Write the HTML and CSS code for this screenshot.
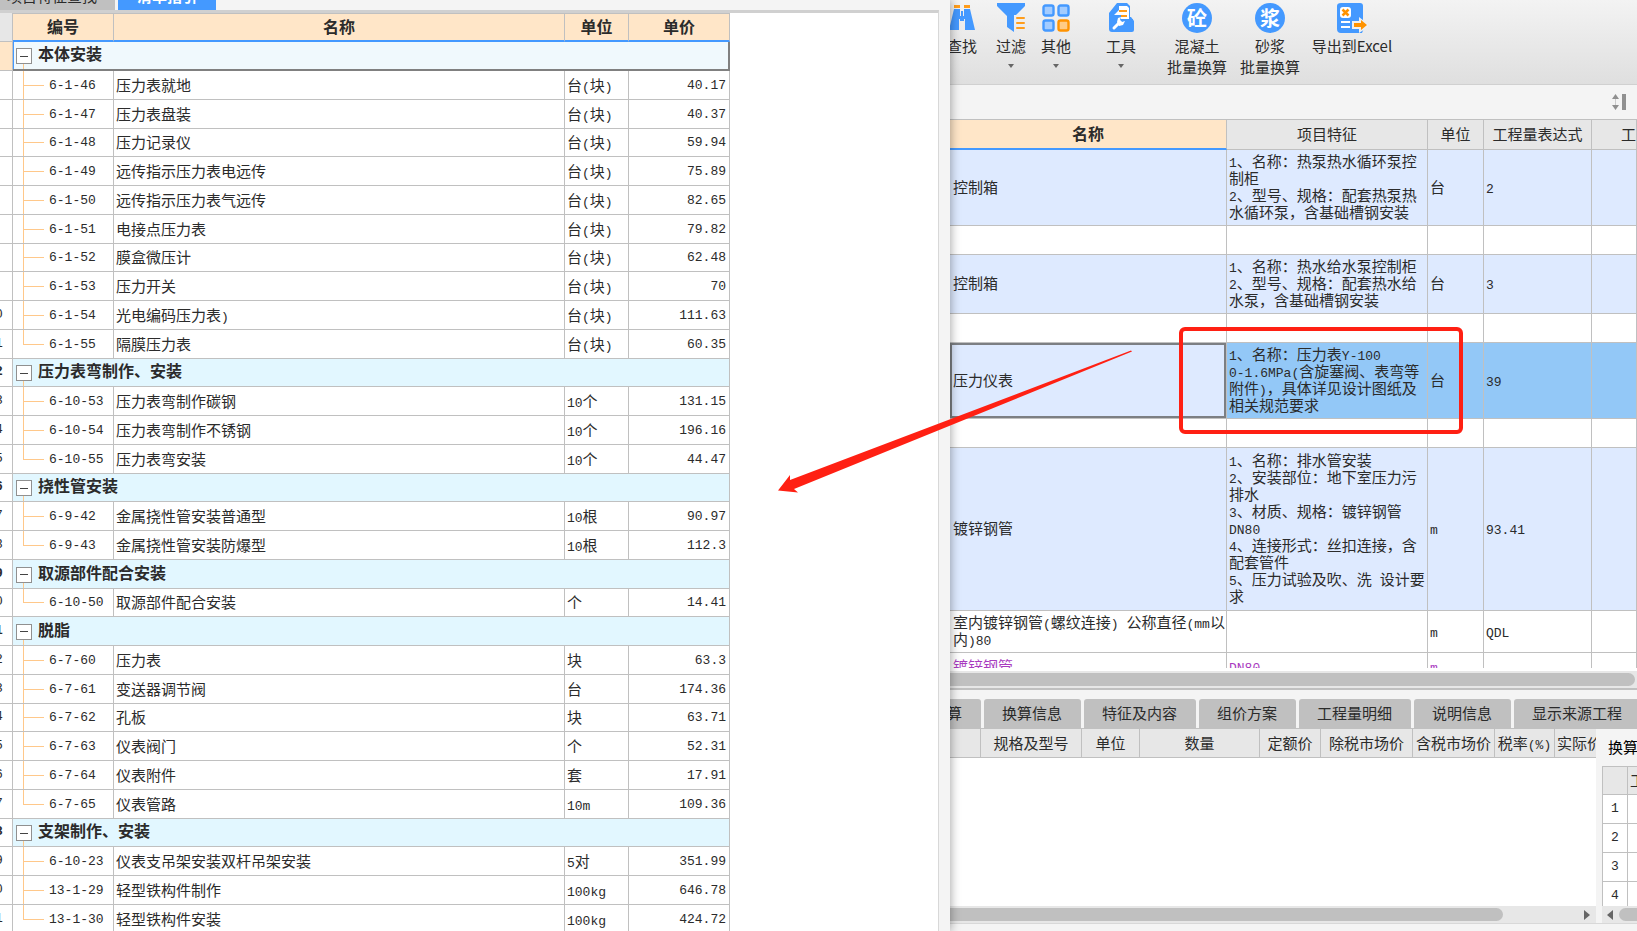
FILE: index.html
```html
<!DOCTYPE html>
<html lang="zh-CN">
<head>
<meta charset="utf-8">
<title>清单指引</title>
<link rel="stylesheet" href="styles.css">
</head>
<body>
<div class="app">
  <section class="guide">
    <nav class="guide-tabs">
      <button class="guide-tab">项目特征查找</button>
      <button class="guide-tab active">清单指引</button>
    </nav>
    <div class="guide-body">
      <table class="grid guide-table">
        <colgroup><col class="c-no"><col class="c-code"><col class="c-name"><col class="c-unit"><col class="c-price"></colgroup>
        <thead>
          <tr><th class="no"></th><th>编号</th><th>名称</th><th>单位</th><th>单价</th></tr>
        </thead>
        <tbody>
          <tr class="group current"><td class="no"></td><td colspan="4"><button class="fold" aria-label="折叠"></button>本体安装</td></tr>
          <tr><td class="no"></td><td class="code">6-1-46</td><td>压力表就地</td><td>台<span class="lat">(</span>块<span class="lat">)</span></td><td class="price">40.17</td></tr>
          <tr><td class="no"></td><td class="code">6-1-47</td><td>压力表盘装</td><td>台<span class="lat">(</span>块<span class="lat">)</span></td><td class="price">40.37</td></tr>
          <tr><td class="no"></td><td class="code">6-1-48</td><td>压力记录仪</td><td>台<span class="lat">(</span>块<span class="lat">)</span></td><td class="price">59.94</td></tr>
          <tr><td class="no"></td><td class="code">6-1-49</td><td>远传指示压力表电远传</td><td>台<span class="lat">(</span>块<span class="lat">)</span></td><td class="price">75.89</td></tr>
          <tr><td class="no"></td><td class="code">6-1-50</td><td>远传指示压力表气远传</td><td>台<span class="lat">(</span>块<span class="lat">)</span></td><td class="price">82.65</td></tr>
          <tr><td class="no"></td><td class="code">6-1-51</td><td>电接点压力表</td><td>台<span class="lat">(</span>块<span class="lat">)</span></td><td class="price">79.82</td></tr>
          <tr><td class="no"></td><td class="code">6-1-52</td><td>膜盒微压计</td><td>台<span class="lat">(</span>块<span class="lat">)</span></td><td class="price">62.48</td></tr>
          <tr><td class="no"></td><td class="code">6-1-53</td><td>压力开关</td><td>台<span class="lat">(</span>块<span class="lat">)</span></td><td class="price">70</td></tr>
          <tr><td class="no">10</td><td class="code">6-1-54</td><td>光电编码压力表<span class="lat">)</span></td><td>台<span class="lat">(</span>块<span class="lat">)</span></td><td class="price">111.63</td></tr>
          <tr><td class="no">11</td><td class="code last">6-1-55</td><td>隔膜压力表</td><td>台<span class="lat">(</span>块<span class="lat">)</span></td><td class="price">60.35</td></tr>
          <tr class="group"><td class="no">12</td><td colspan="4"><button class="fold" aria-label="折叠"></button>压力表弯制作、安装</td></tr>
          <tr><td class="no">13</td><td class="code">6-10-53</td><td>压力表弯制作碳钢</td><td><span class="lat">10</span>个</td><td class="price">131.15</td></tr>
          <tr><td class="no">14</td><td class="code">6-10-54</td><td>压力表弯制作不锈钢</td><td><span class="lat">10</span>个</td><td class="price">196.16</td></tr>
          <tr><td class="no">15</td><td class="code last">6-10-55</td><td>压力表弯安装</td><td><span class="lat">10</span>个</td><td class="price">44.47</td></tr>
          <tr class="group"><td class="no">16</td><td colspan="4"><button class="fold" aria-label="折叠"></button>挠性管安装</td></tr>
          <tr><td class="no">17</td><td class="code">6-9-42</td><td>金属挠性管安装普通型</td><td><span class="lat">10</span>根</td><td class="price">90.97</td></tr>
          <tr><td class="no">18</td><td class="code last">6-9-43</td><td>金属挠性管安装防爆型</td><td><span class="lat">10</span>根</td><td class="price">112.3</td></tr>
          <tr class="group"><td class="no">19</td><td colspan="4"><button class="fold" aria-label="折叠"></button>取源部件配合安装</td></tr>
          <tr><td class="no">20</td><td class="code last">6-10-50</td><td>取源部件配合安装</td><td>个</td><td class="price">14.41</td></tr>
          <tr class="group"><td class="no">21</td><td colspan="4"><button class="fold" aria-label="折叠"></button>脱脂</td></tr>
          <tr><td class="no">22</td><td class="code">6-7-60</td><td>压力表</td><td>块</td><td class="price">63.3</td></tr>
          <tr><td class="no">23</td><td class="code">6-7-61</td><td>变送器调节阀</td><td>台</td><td class="price">174.36</td></tr>
          <tr><td class="no">24</td><td class="code">6-7-62</td><td>孔板</td><td>块</td><td class="price">63.71</td></tr>
          <tr><td class="no">25</td><td class="code">6-7-63</td><td>仪表阀门</td><td>个</td><td class="price">52.31</td></tr>
          <tr><td class="no">26</td><td class="code">6-7-64</td><td>仪表附件</td><td>套</td><td class="price">17.91</td></tr>
          <tr><td class="no">27</td><td class="code last">6-7-65</td><td>仪表管路</td><td><span class="lat">10m</span></td><td class="price">109.36</td></tr>
          <tr class="group"><td class="no">28</td><td colspan="4"><button class="fold" aria-label="折叠"></button>支架制作、安装</td></tr>
          <tr><td class="no">29</td><td class="code">6-10-23</td><td>仪表支吊架安装双杆吊架安装</td><td><span class="lat">5</span>对</td><td class="price">351.99</td></tr>
          <tr><td class="no">30</td><td class="code">13-1-29</td><td>轻型铁构件制作</td><td><span class="lat">100kg</span></td><td class="price">646.78</td></tr>
          <tr><td class="no">31</td><td class="code last">13-1-30</td><td>轻型铁构件安装</td><td><span class="lat">100kg</span></td><td class="price">424.72</td></tr>
        </tbody>
      </table>
    </div>
  </section>

  <main class="work">
    <div class="toolbar">
      <button class="tool find">
        <svg width="30" height="32" viewBox="0 0 30 32"><g fill="#ff9d1c"><rect x="7" y="3" width="6" height="3"/><rect x="17" y="3" width="6" height="3"/></g><path fill="#4499ff" d="M7 7h6v7h1V9h2v5h1V7h6l5 21H18V17h-1v2h-4v-2h-1v11H2z"/></svg>
        <span>查找</span>
      </button>
      <button class="tool filter">
        <svg width="30" height="32" viewBox="0 0 30 32"><path fill="#4499ff" d="M1 1h28v3l-9 9h-2v17l-7-5V14L1 4z"/><path stroke="#ff9d1c" stroke-width="2" stroke-linecap="round" d="M21 16h7M21 21h7M21 26h7"/></svg>
        <span>过滤</span><i class="caret"></i>
      </button>
      <button class="tool other">
        <svg width="30" height="32" viewBox="0 0 30 32" stroke-width="2.400"><g fill="#a3ccff" stroke="#4499ff"><rect x="2.500" y="3.500" width="10" height="10" rx="2"/><rect x="17.500" y="3.500" width="10" height="10" rx="2"/><rect x="2.500" y="18.500" width="10" height="10" rx="2"/></g><rect x="17.500" y="18.500" width="10" height="10" rx="2" fill="#ffcb85" stroke="#ff9300"/></svg>
        <span>其他</span><i class="caret"></i>
      </button>
      <button class="tool kit">
        <svg width="30" height="32" viewBox="0 0 30 32"><path fill="#4499ff" d="M11 1h10l3 3v11h1l3 4v9q0 2-2 2H6q-3 0-3-3V11z"/><path fill="#fff" d="M13 4h8l2 2v11h-8v-4H8l5-5z"/><path stroke="#ff9d1c" stroke-width="2" d="M13 9h8M15 14h6"/><path fill="#4499ff" d="M6 14h8v3h13v10H6z"/><path fill="none" stroke="#fff" stroke-width="3" stroke-linecap="round" d="M8 26l6-6"/><path fill="#fff" d="M11 20l1-4 3-1-1 3 2 2 3-1-2 4-4 1z"/></svg>
        <span>工具</span><i class="caret"></i>
      </button>
      <button class="tool concrete">
        <span class="badge">砼</span>
        <span>混凝土<br>批量换算</span>
      </button>
      <button class="tool mortar">
        <span class="badge">浆</span>
        <span>砂浆<br>批量换算</span>
      </button>
      <button class="tool export">
        <svg width="32" height="32" viewBox="0 0 32 32"><path fill="#4499ff" d="M5 1h19q3 0 3 3v14l1 8-2 5H5q-4 0-4-4V4q0-3 4-3z"/><rect x="4" y="5" width="11" height="11" rx="3" fill="#fff"/><path stroke="#ff9300" stroke-width="2.500" d="M6.500 7.500l6 6M12.500 7.500l-6 6"/><path stroke="#fff" stroke-width="2" d="M5 20h9M5 25h9"/><path fill="#f0f0f0" d="M16 19h7v-4l9 7v3l-9 6v-4h-7z"/><path fill="#ff9300" d="M18 21h7v-3l6 5-6 5v-3h-7z"/></svg>
        <span>导出到Excel</span>
      </button>
    </div>

    <div class="strip">
      <svg width="14" height="16" viewBox="0 0 14 16" fill="#909090"><path d="M0 5l3.500-5L7 5zM0 11h7l-3.500 5zM10 0h4v16h-4z"/><path d="M3 5h1v6H3z" fill="#ccc"/></svg>
    </div>

    <div class="list">
      <table class="grid list-table">
        <colgroup><col class="l-name"><col class="l-spec"><col class="l-unit"><col class="l-expr"><col class="l-qty"></colgroup>
        <thead><tr><th class="sorted">名称</th><th>项目特征</th><th>单位</th><th>工程量表达式</th><th>工程量</th></tr></thead>
        <tbody>
          <tr class="item"><td>控制箱</td><td><span class="lat">1</span>、名称：热泵热水循环泵控<br>制柜<br><span class="lat">2</span>、型号、规格：配套热泵热<br>水循环泵，含基础槽钢安装</td><td>台</td><td><span class="lat">2</span></td><td></td></tr>
          <tr><td></td><td></td><td></td><td></td><td></td></tr>
          <tr class="item"><td>控制箱</td><td><span class="lat">1</span>、名称：热水给水泵控制柜<br><span class="lat">2</span>、型号、规格：配套热水给<br>水泵，含基础槽钢安装</td><td>台</td><td><span class="lat">3</span></td><td></td></tr>
          <tr><td></td><td></td><td></td><td></td><td></td></tr>
          <tr class="item chosen"><td class="focus">压力仪表</td><td><span class="lat">1</span>、名称：压力表<span class="lat">Y-100</span><br><span class="lat">0-1.6MPa(</span>含旋塞阀、表弯等<br>附件<span class="lat">)</span>，具体详见设计图纸及<br>相关规范要求</td><td>台</td><td><span class="lat">39</span></td><td></td></tr>
          <tr><td></td><td></td><td></td><td></td><td></td></tr>
          <tr class="item tall"><td>镀锌钢管</td><td><span class="lat">1</span>、名称：排水管安装<br><span class="lat">2</span>、安装部位：地下室压力污<br>排水<br><span class="lat">3</span>、材质、规格：镀锌钢管<br><span class="lat">DN80</span><br><span class="lat">4</span>、连接形式：丝扣连接，含<br>配套管件<br><span class="lat">5</span>、压力试验及吹、洗<span class="lat"> </span>设计要<br>求</td><td><span class="lat">m</span></td><td><span class="lat">93.41</span></td><td></td></tr>
          <tr><td>室内镀锌钢管<span class="lat">(</span>螺纹连接<span class="lat">) </span>公称直径<span class="lat">(mm</span>以<br>内<span class="lat">)80</span></td><td></td><td><span class="lat">m</span></td><td><span class="lat">QDL</span></td><td></td></tr>
          <tr class="material"><td>镀锌钢管</td><td><span class="lat">DN80</span></td><td><span class="lat">m</span></td><td></td><td></td></tr>
        </tbody>
      </table>
    </div>
    <div class="hscroll"><div class="thumb"></div></div>

    <nav class="tabs">
      <button>算</button><button>换算信息</button><button>特征及内容</button><button>组价方案</button><button>工程量明细</button><button>说明信息</button><button>显示来源工程</button>
    </nav>

    <div class="detail">
      <div class="detail-main">
        <div class="pane">
          <table class="grid detail-table">
            <colgroup><col class="d0"><col class="d1"><col class="d2"><col class="d3"><col class="d4"><col class="d5"><col class="d6"><col class="d7"><col class="d8"></colgroup>
            <thead><tr><th></th><th>规格及型号</th><th>单位</th><th>数量</th><th>定额价</th><th>除税市场价</th><th>含税市场价</th><th>税率<span class="lat">(%)</span></th><th>实际价</th></tr></thead>
          </table>
        </div>
        <div class="hscroll"><div class="thumb short"></div><i class="right"></i></div>
      </div>
      <div class="detail-side">
        <h2>换算</h2>
        <div class="pane">
          <table class="grid side-table">
            <colgroup><col class="s0"><col class="s1"></colgroup>
            <thead><tr><th></th><th>工</th></tr></thead>
            <tbody><tr><td>1</td><td></td></tr><tr><td>2</td><td></td></tr><tr><td>3</td><td></td></tr><tr><td>4</td><td></td></tr></tbody>
          </table>
        </div>
        <div class="hscroll"><i class="left"></i><div class="thumb start"></div></div>
      </div>
    </div>
    <footer class="status"></footer>
  </main>

  <svg class="markup" width="700" height="175" viewBox="0 0 700 175">
    <rect x="409" y="10" width="280" height="103" rx="4" fill="none" stroke="#ff2013" stroke-width="4"/>
    <path fill="#ff2013" d="M6 171.500L18 156v5L359 31.500l1 1L22 170l4 3.500z"/>
  </svg>
</div>
</body>
</html>
```
FILE: styles.css
```css
* { box-sizing: border-box; }

body {
  margin: 0;
  overflow: hidden;
  font: 15px/17px "Noto Sans CJK SC", "Liberation Sans", sans-serif;
  color: #2b2b2b;
}

button {
  border: 0;
  padding: 0;
  background: none;
  font: inherit;
  color: inherit;
  white-space: nowrap;
}

.app {
  position: relative;
  display: grid;
  grid-template-columns: 950px minmax(0, 1fr);
  height: 100vh;
  overflow: hidden;
  background: #f4f4f4;
}

.lat {
  font-family: "Liberation Mono", monospace;
  font-size: 13px;
  line-height: 1px;
}

/* shared table look */
.grid {
  table-layout: fixed;
  border-collapse: separate;
  border-spacing: 0;
}
.grid th, .grid td {
  padding: 0 2px 2px;
  border: 0 solid #c0c0c0;
  border-width: 0 1px 1px 0;
  text-align: left;
  white-space: nowrap;
  overflow: hidden;
}
.grid th { background: #e7e7e7; font-weight: 400; text-align: center; }

/* guide panel */
.guide {
  z-index: 1;
  display: flex;
  flex-direction: column;
  min-height: 0;
  padding-right: 11px;
  background: #f4f4f4;
  box-shadow: 0 0 10px rgba(0, 0, 0, .4);
}
.guide-tabs {
  display: flex;
  flex: none;
  gap: 3px;
  margin-top: -20px;
}
.guide-tab {
  height: 30px;
  padding: 0 18px 0 7px;
  background: #c0c0c0;
}
.guide-tab.active {
  padding: 0 19px;
  background: #4499ff;
  color: #fff;
  font-weight: 700;
}
.guide-body {
  flex: 1;
  min-height: 0;
  overflow: hidden;
  border-top: 3px solid #d0d0d0;
  border-right: 1px solid #d8d8d8;
  background: #fff;
}
.guide-table { width: 752px; margin-left: -22px; }
.c-no { width: 35px; }
.c-code { width: 101px; }
.c-name { width: 451px; }
.c-unit { width: 64px; }
.c-price { width: 101px; }
.guide-table th {
  height: 29px;
  border-top-width: 1px;
  border-bottom: 2px solid #4499ff;
  background: #ffe6c8;
  font-size: 16px;
  font-weight: 700;
}
.guide-table th.no { border-top: 0; border-bottom: 1px solid #c0c0c0; background: #e7e7e7; }
.guide-table td { height: 29px; }
.guide-table tbody tr:nth-child(4n) td { height: 28px; }
.guide-table td.no {
  font: 13px "Liberation Mono", monospace;
  text-align: center;
}
.guide-table .price, .guide-table .code {
  padding-bottom: 0;
  font-family: "Liberation Mono", monospace;
  font-size: 13px;
}
.guide-table .price { padding-right: 3px; text-align: right; }
.guide-table .code {
  padding-left: 36px;
  background:
    linear-gradient(#ffc88a, #ffc88a) 10px 0 / 1px 100% no-repeat,
    linear-gradient(#ffc88a, #ffc88a) 10px 50% / 21px 1px no-repeat;
}
.guide-table .code.last { background-size: 1px 50%, 21px 1px; }
.group td { font-size: 16px; font-weight: 700; }
.group td + td {
  padding-left: 3px;
  background: linear-gradient(#ffc88a, #ffc88a) 10px 100% / 1px 50% no-repeat #e2f7ff;
}
.guide-table .group .no { font-weight: 700; }
.group.current .no { background: #ffe6c8; }
.group.current td + td {
  padding-left: 3px;
  border-right: 2px solid #808080;
  border-bottom: 2px solid #808080;
  background-color: #f0f9fd;
  box-shadow: inset 1px 0 #4499ff;
}
.fold {
  display: inline-block;
  width: 16px;
  height: 16px;
  margin-right: 6px;
  border: 1px solid #909090;
  background: linear-gradient(#444, #444) center / 8px 1px no-repeat #fff;
  vertical-align: -3px;
}

/* work area */
.work {
  display: flex;
  flex-direction: column;
  min-width: 0;
  min-height: 0;
  overflow: hidden;
}
.toolbar {
  display: flex;
  align-items: flex-start;
  flex: none;
  height: 85px;
  border-bottom: 1px solid #d0d0d0;
  background: linear-gradient(#f3f3f3, #dfdfdf);
}
.tool {
  display: flex;
  flex-direction: column;
  align-items: center;
  flex: none;
  width: 60px;
  padding-top: 2px;
  line-height: 21px;
}
.tool > span { margin-top: 1px; }
.find { width: 30px; margin-left: -3px; }
.filter { width: 30px; margin-left: 19px; }
.other { width: 30px; margin-left: 15px; }
.kit { width: 30px; margin-left: 35px; }
.concrete { margin-left: 31px; }
.mortar { margin-left: 13px; }
.export { width: 82px; margin-left: 11px; }
.tool .badge {
  width: 30px;
  height: 30px;
  margin: 1px 0;
  border-radius: 50%;
  background: #4499ff;
  color: #fff;
  font-size: 20px;
  font-weight: 700;
  line-height: 29px;
}
.caret {
  margin-top: 8px;
  border: 3px solid transparent;
  border-top: 4px solid #666;
}
.strip {
  display: flex;
  flex: none;
  align-items: center;
  justify-content: flex-end;
  height: 34px;
  padding-right: 11px;
}
.list {
  flex: none;
  height: 552px;
  overflow: hidden;
  border-top: 1px solid #c0c0c0;
  border-bottom: 3px solid #fff;
  background: #fff;
}
.list-table { width: 100%; }
.l-name { width: 277px; }
.l-spec { width: 201px; }
.l-unit { width: 56px; }
.l-expr { width: 108px; }
.list-table th { height: 30px; }
.list-table th:last-child { padding-left: 29px; text-align: left; }
.list-table th.sorted {
  border-bottom: 2px solid #4499ff;
  background: #ffe6c8;
  font-size: 16px;
  font-weight: 700;
}
.list-table td { height: 29px; padding: 2px 2px 5px; }
.list-table td:first-child { padding-left: 3px; }
.item td { background: #deeaff; }
.chosen td { background: #93c8f7; }
.chosen td.focus { background: #deeaff; box-shadow: inset 0 0 0 2px #7c7f83; }
.list-table .tall td { height: 163px; }
.material { color: #a93bbf; }

.hscroll {
  display: flex;
  flex: none;
  align-items: center;
  height: 17px;
  background: #e7e7e7;
}
.thumb {
  flex: 1;
  height: 13px;
  margin-right: 2px;
  border-radius: 0 7px 7px 0;
  background: #c0c0c0;
}
.thumb.short { margin-right: 81px; }
.thumb.start { margin-right: 0; border-radius: 7px 0 0 7px; }
.right, .left { border: 5px solid transparent; }
.right { margin-right: 1px; border-left: 6px solid #666; }
.left { margin-right: 6px; border-right: 6px solid #666; }

.tabs {
  display: flex;
  flex: none;
  gap: 3px;
  height: 41px;
  padding-top: 9px;
  margin-left: -21px;
  border-top: 2px solid #c0c0c0;
  border-bottom: 1px solid #c0c0c0;
}
.tabs button {
  flex: none;
  padding: 0 19px 3px 18px;
  border-radius: 3px 3px 0 0;
  background: #c0c0c0;
}

.detail {
  display: grid;
  grid-template-columns: minmax(0, 1fr) 35px;
  gap: 6px;
  flex: 1;
  min-height: 0;
}
.detail-main, .detail-side {
  display: flex;
  flex-direction: column;
  min-width: 0;
  min-height: 0;
}
.pane { flex: 1; min-height: 0; overflow: hidden; background: #fff; }
.detail-table { width: 655px; }
.detail-table th { height: 29px; }
.d0 { width: 31px; }
.d1 { width: 101px; }
.d2 { width: 58px; }
.d3 { width: 120px; }
.d4 { width: 61px; }
.d5 { width: 92px; }
.d6 { width: 82px; }
.d7 { width: 60px; }
.d8 { width: 50px; }
.detail-side h2 {
  flex: none;
  height: 37px;
  margin: 0;
  padding-left: 6px;
  overflow: hidden;
  font-size: 15px;
  font-weight: 400;
  line-height: 35px;
  color: #000;
  white-space: nowrap;
}
.side-table {
  width: 60px;
  border-top: 1px solid #c0c0c0;
  border-left: 1px solid #c0c0c0;
}
.s0 { width: 25px; }
.side-table th, .side-table td { height: 29px; }
.side-table tr:first-child th { height: 28px; }
.side-table td {
  font: 13px "Liberation Mono", monospace;
  text-align: center;
}
.side-table th + th { text-align: left; }
.status {
  flex: none;
  height: 8px;
  border-top: 1px solid #d8d8d8;
}

/* arrow and frame drawn across both panels */
.markup {
  position: absolute;
  z-index: 2;
  left: 772px;
  top: 319px;
}
```
